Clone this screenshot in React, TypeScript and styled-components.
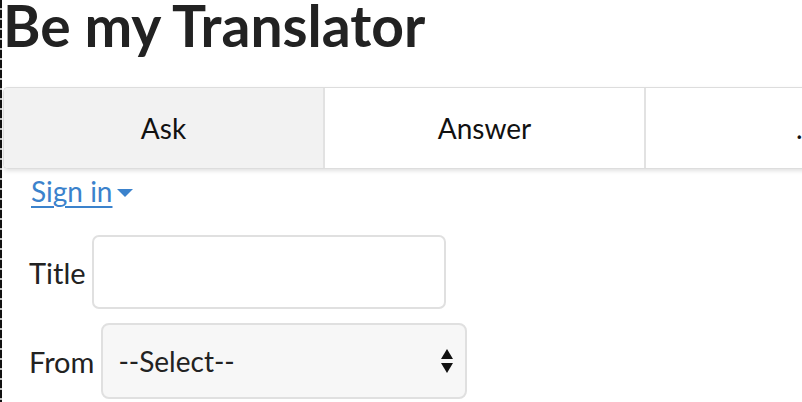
import React from "react";
import styled, { createGlobalStyle } from "styled-components";

const Global = createGlobalStyle`
  html, body { margin: 0; padding: 0; background: #fff; }
  body { font-family: Lato, "Open Sans", sans-serif; color: #222; overflow: hidden; }
`;

const Page = styled.div`
  width: 802px;
  height: 402px;
  box-sizing: border-box;
  padding-left: 3px;
  background-image: repeating-linear-gradient(to bottom, #111 0 8px, #bbb 8px 10px);
  background-size: 2px 100%;
  background-repeat: no-repeat;
  overflow: hidden;
`;

const Heading = styled.h1`
  margin: 0;
  padding: 0;
  font-size: 57px;
  font-weight: 700;
  line-height: 50px;
  height: 87px;
  color: #222;
  white-space: nowrap;
`;

const TabBar = styled.nav`
  display: flex;
  width: 1000px;
  height: 82px;
  box-sizing: border-box;
  border: 1px solid #ddd;
  border-right: none;
  border-radius: 5px 0 0 5px;
  box-shadow: 0 2px 4px rgba(0, 0, 0, 0.12);
  overflow: hidden;
`;

const Tab = styled.div<{ $active?: boolean; $last?: boolean }>`
  flex: 0 0 ${(p) => (p.$last ? "360px" : "321px")};
  display: flex;
  align-items: center;
  justify-content: ${(p) => (p.$last ? "flex-start" : "center")};
  padding-left: ${(p) => (p.$last ? "150px" : "0")};
  box-sizing: border-box;
  background: ${(p) => (p.$active ? "#f2f2f2" : "#fff")};
  border-right: ${(p) => (p.$last ? "none" : "2px solid #e2e2e2")};
  font-size: 28px;
  color: #111;
`;

const Body = styled.div`
  padding: 6px 0 0 26px;
`;

const SignIn = styled.a`
  display: inline-flex;
  align-items: center;
  gap: 5px;
  margin-left: 2px;
  font-size: 28px;
  color: #3b82cc;
  text-decoration: underline;
  text-underline-offset: 4px;
  text-decoration-thickness: 2px;
  line-height: 32px;
  cursor: pointer;
`;

const Caret = styled.span`
  display: inline-block;
  width: 0;
  height: 0;
  border-left: 8px solid transparent;
  border-right: 8px solid transparent;
  border-top: 8px solid #3b82cc;
  margin-top: 4px;
`;

const Form = styled.div`
  display: flex;
  flex-direction: column;
  gap: 14px;
  margin-top: 28px;
`;

const Row = styled.div<{ $gap?: number }>`
  display: flex;
  align-items: center;
  gap: ${(p) => p.$gap ?? 6}px;
`;

const Label = styled.label`
  font-size: 29px;
  color: #222;
`;

const TextInput = styled.input`
  width: 354px;
  height: 74px;
  box-sizing: border-box;
  border: 2px solid #e0e0e0;
  border-radius: 7px;
  background: #fff;
  font-family: inherit;
  font-size: 28px;
  outline: none;
`;

const SelectBox = styled.div`
  position: relative;
  width: 366px;
  height: 76px;
  box-sizing: border-box;
  border: 2px solid #e0e0e0;
  border-radius: 8px;
  background: #f7f7f7;
  display: flex;
  align-items: center;
  padding-left: 15px;
  font-size: 28px;
  color: #222;
`;

const Arrows = styled.svg`
  position: absolute;
  right: 12px;
  top: 50%;
  transform: translateY(-50%);
`;

export default function App() {
  return (
    <>
      <Global />
      <Page>
        <Heading>Be my Translator</Heading>
        <TabBar>
          <Tab $active>Ask</Tab>
          <Tab>Answer</Tab>
          <Tab $last>...</Tab>
        </TabBar>
        <Body>
          <SignIn>
            Sign in
            <Caret />
          </SignIn>
          <Form>
            <Row>
              <Label>Title</Label>
              <TextInput type="text" />
            </Row>
            <Row $gap={7}>
              <Label>From</Label>
              <SelectBox>
                --Select--
                <Arrows width="12" height="26" viewBox="0 0 12 26">
                  <polygon points="6,1 12,11 0,11" fill="#111" />
                  <polygon points="0,15 12,15 6,25" fill="#111" />
                </Arrows>
              </SelectBox>
            </Row>
          </Form>
        </Body>
      </Page>
    </>
  );
}
